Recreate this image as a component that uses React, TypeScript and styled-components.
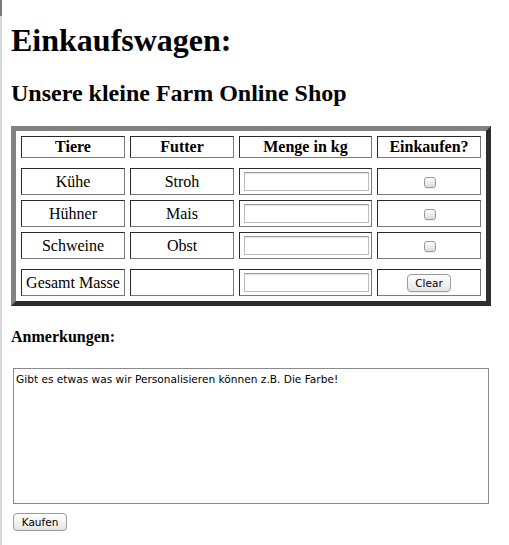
import React from "react";
import styled, { createGlobalStyle } from "styled-components";

const GlobalStyle = createGlobalStyle`
  html {
    background:
      linear-gradient(#7b7b7b, #7b7b7b) 0 0 / 2px 16px no-repeat,
      linear-gradient(#d6d6d6, #d6d6d6) 0 0 / 2px 100% no-repeat,
      #ffffff;
    min-height: 100%;
  }
  body {
    margin: 8px 8px 8px 11px;
    font-family: "Liberation Serif", "Times New Roman", serif;
    font-size: 16px;
    color: #000;
  }
`;

const Page = styled.div`
  display: flex;
  flex-direction: column;
  align-items: flex-start;
`;

const Title = styled.h1`
  font-size: 32px;
  font-weight: bold;
  margin: 14px 0 21px;
`;

const Subtitle = styled.h2`
  font-size: 24px;
  font-weight: bold;
  margin: 0 0 19px;
`;

const CartFrame = styled.div`
  box-sizing: border-box;
  width: 480px;
  display: grid;
  grid-template-columns: 104px 104px 133px 104px;
  column-gap: 5px;
  row-gap: 5px;
  padding: 5px;
  border: 5px solid;
  border-color: #828282 #2d2d2d #2d2d2d #828282;
`;

const Cell = styled.div<{ $head?: boolean; $foot?: boolean }>`
  box-sizing: border-box;
  height: ${(p) => (p.$head ? 22 : 27)}px;
  margin-bottom: ${(p) => (p.$head ? 5 : 0)}px;
  margin-top: ${(p) => (p.$foot ? 5 : 0)}px;
  border: 1px solid;
  border-color: #2a2a2a #7a7a7a #7a7a7a #2a2a2a;
  display: flex;
  align-items: center;
  justify-content: center;
  font-weight: ${(p) => (p.$head ? "bold" : "normal")};
  white-space: nowrap;
`;

const AmountInput = styled.input`
  box-sizing: border-box;
  width: 125px;
  height: 19px;
  margin: 0 0 0 2px;
  border: 1px solid #bdbdbd;
  border-top-color: #9c9c9c;
  box-shadow: inset 0 1px 1px rgba(0, 0, 0, 0.12);
  background: #fff;
  padding: 0 2px;
  font-family: "DejaVu Sans", sans-serif;
  font-size: 11px;
  outline: none;
`;

const Check = styled.input`
  appearance: none;
  -webkit-appearance: none;
  box-sizing: border-box;
  width: 12px;
  height: 11px;
  margin: 1px 0 0 1px;
  border: 1px solid #9a9a9a;
  border-radius: 3px;
  background: linear-gradient(#ffffff, #dcdcdc);
  box-shadow: 0 1px 0 rgba(0, 0, 0, 0.06);
`;

const PushButton = styled.button<{ $w: number }>`
  box-sizing: border-box;
  width: ${(p) => p.$w}px;
  height: 18px;
  padding: 0;
  border: 1px solid #9b9b9b;
  border-radius: 4px;
  background: linear-gradient(#ffffff 0%, #f3f3f3 50%, #e4e4e4 100%);
  box-shadow: 0 1px 1px rgba(0, 0, 0, 0.08);
  font-family: "DejaVu Sans", sans-serif;
  font-size: 10.5px;
  color: #000;
  line-height: 16px;
`;

const NotesTitle = styled.h4`
  font-size: 16px;
  font-weight: bold;
  margin: 22px 0 22px;
`;

const Notes = styled.textarea`
  box-sizing: border-box;
  width: 476px;
  height: 136px;
  margin: 0 0 0 2px;
  border: 1px solid #8a8a8a;
  padding: 4px 2px;
  resize: none;
  font-family: "DejaVu Sans", sans-serif;
  font-size: 10.6px;
  line-height: 13px;
  color: #000;
  outline: none;
`;

const BuyRow = styled.div`
  margin: 8px 0 0 2px;
`;

const rows = [
  { tier: "Kühe", futter: "Stroh" },
  { tier: "Hühner", futter: "Mais" },
  { tier: "Schweine", futter: "Obst" },
];

export default function App() {
  return (
    <>
      <GlobalStyle />
      <Page>
        <Title>Einkaufswagen:</Title>
        <Subtitle>Unsere kleine Farm Online Shop</Subtitle>
        <CartFrame>
          <Cell $head>Tiere</Cell>
          <Cell $head>Futter</Cell>
          <Cell $head>Menge in kg</Cell>
          <Cell $head>Einkaufen?</Cell>
          {rows.map((r) => (
            <React.Fragment key={r.tier}>
              <Cell>{r.tier}</Cell>
              <Cell>{r.futter}</Cell>
              <Cell>
                <AmountInput type="text" />
              </Cell>
              <Cell>
                <Check type="checkbox" />
              </Cell>
            </React.Fragment>
          ))}
          <Cell $foot>Gesamt Masse</Cell>
          <Cell $foot></Cell>
          <Cell $foot>
            <AmountInput type="text" />
          </Cell>
          <Cell $foot>
            <PushButton $w={44}>Clear</PushButton>
          </Cell>
        </CartFrame>
        <NotesTitle>Anmerkungen:</NotesTitle>
        <Notes defaultValue="Gibt es etwas was wir Personalisieren können z.B. Die Farbe!" />
        <BuyRow>
          <PushButton $w={54}>Kaufen</PushButton>
        </BuyRow>
      </Page>
    </>
  );
}
